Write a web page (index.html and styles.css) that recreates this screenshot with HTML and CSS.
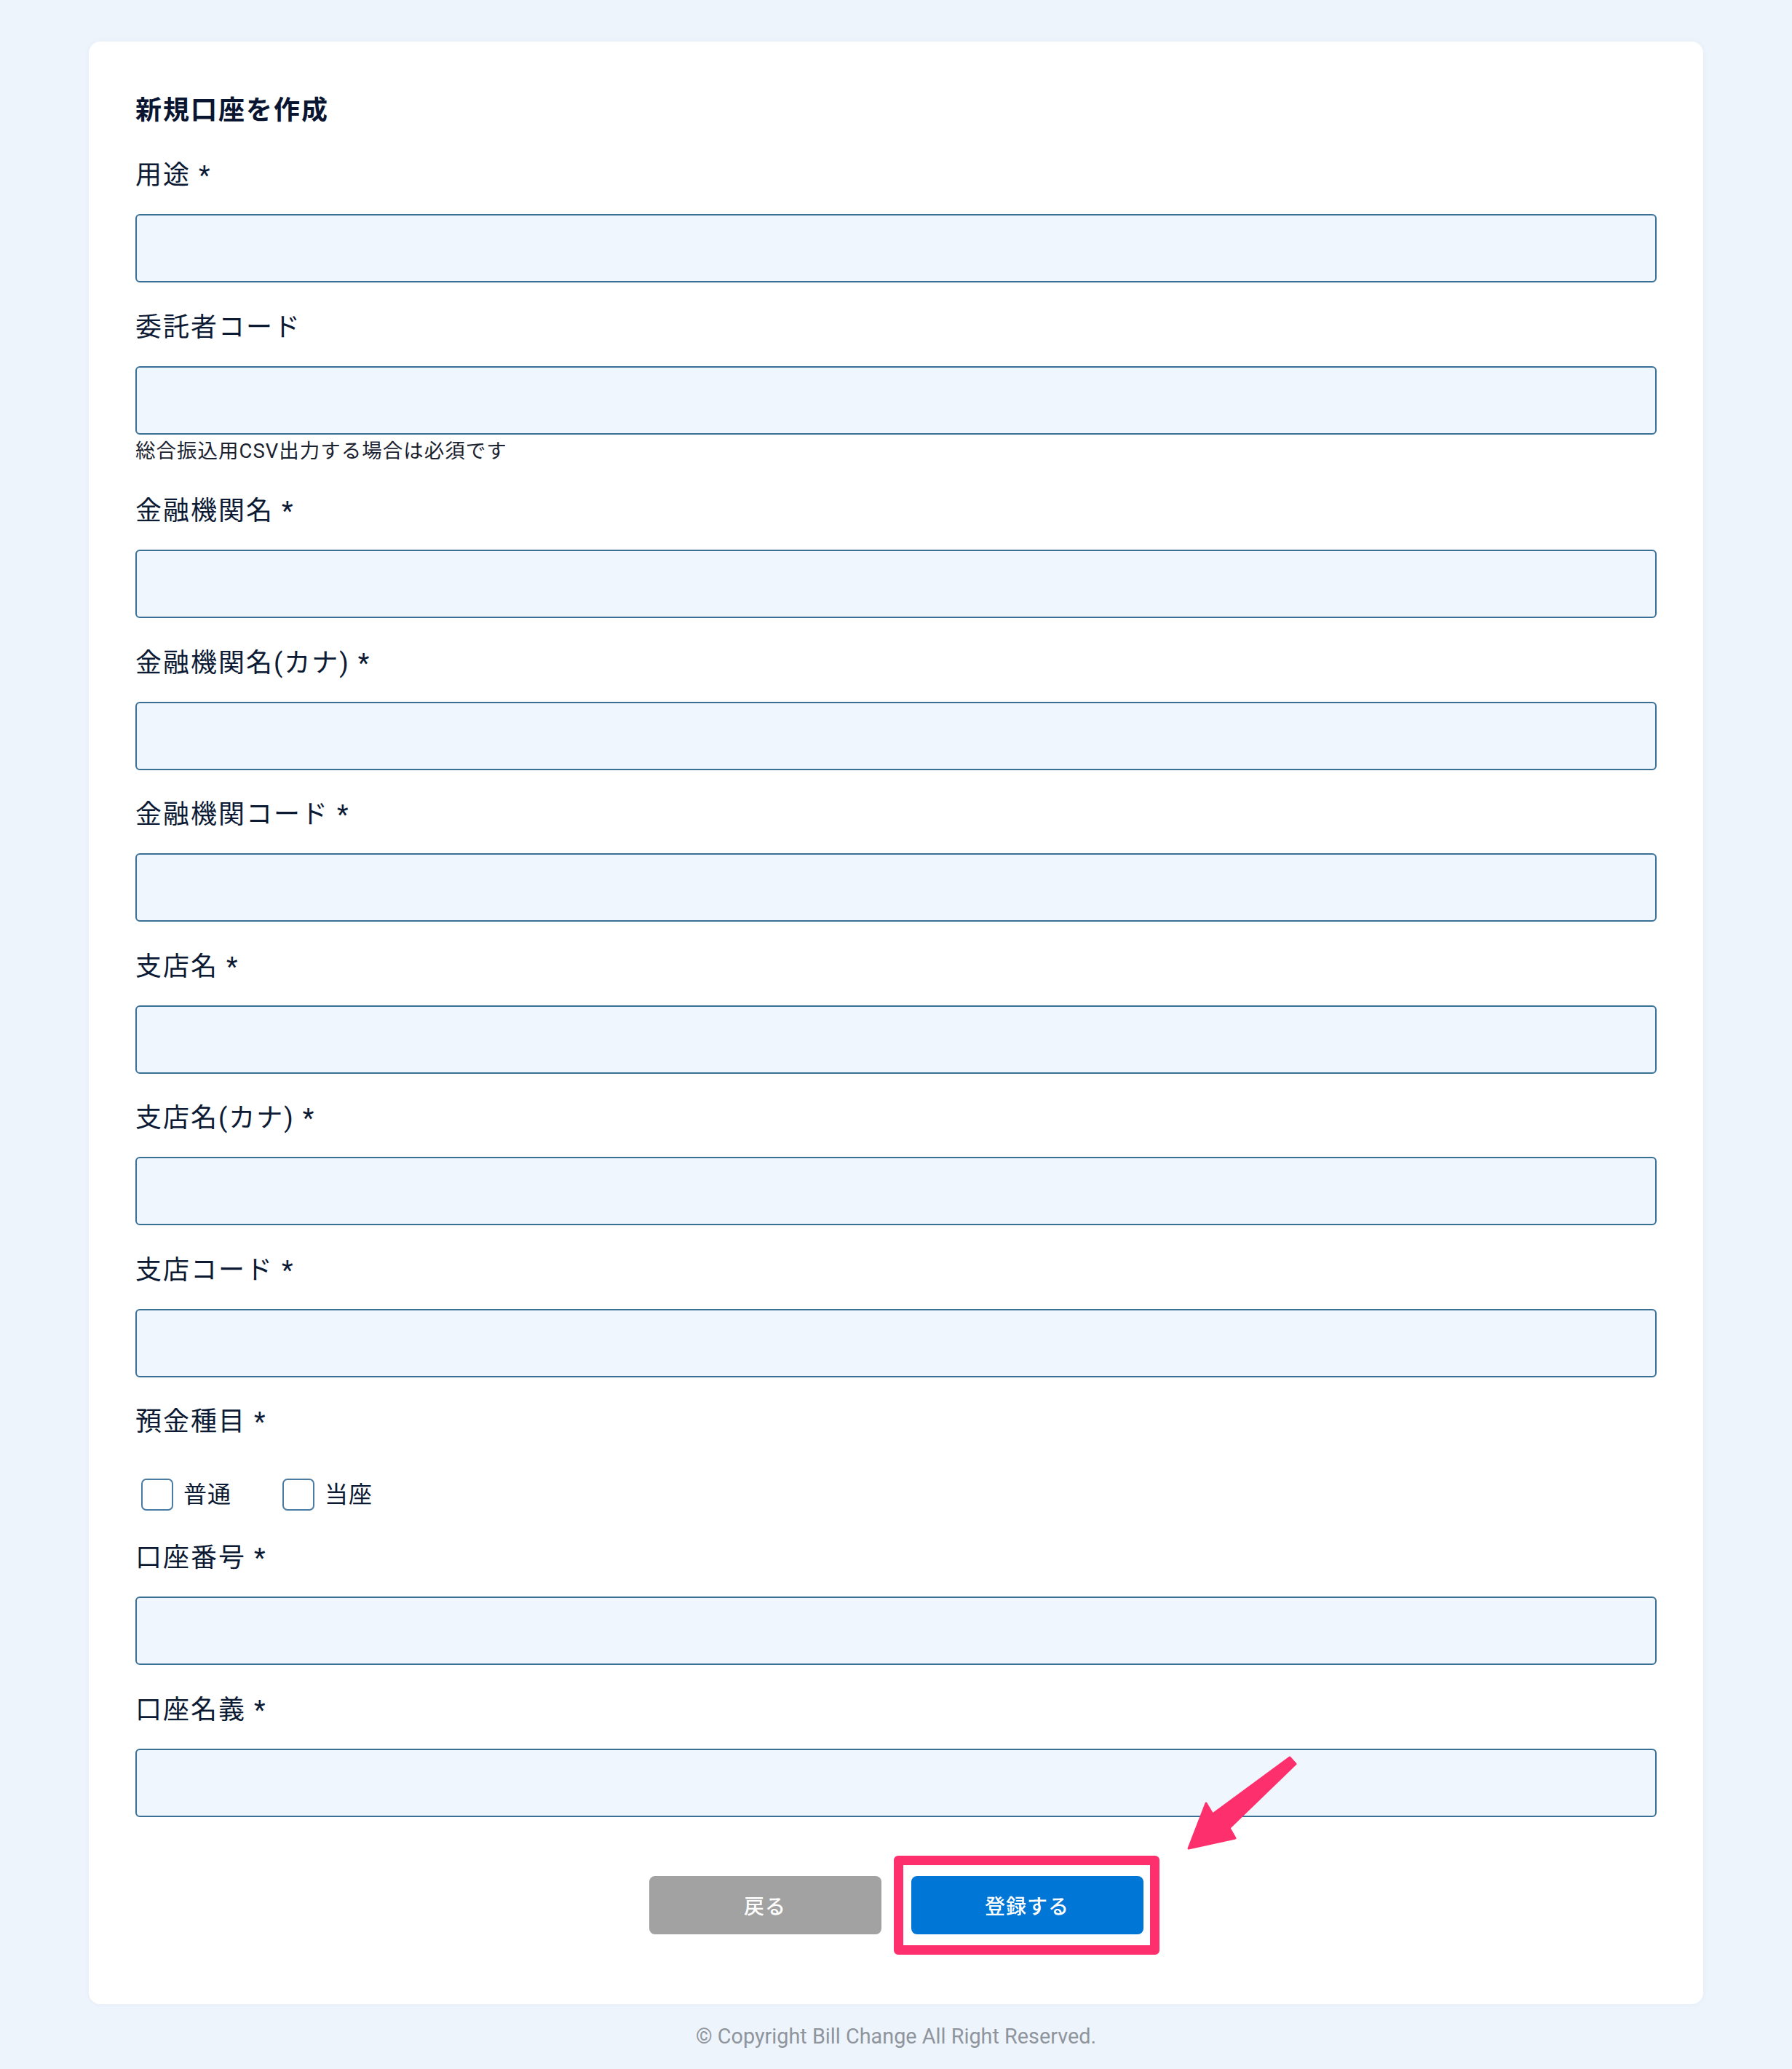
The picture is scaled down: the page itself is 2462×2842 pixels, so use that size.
FILE: index.html
```html
<!DOCTYPE html>
<html lang="ja">
<head>
    <meta charset="UTF-8">
    <meta name="viewport" content="width=device-width, initial-scale=1.0">
    <title>新規口座を作成</title>
    <link rel="stylesheet" href="styles.css">
</head>
<body>
    <main class="page">
        <section class="card">
            <h1 class="card-title">新規口座を作成</h1>

            <form class="account-form">
                <div class="field">
                    <label class="field-label" for="purpose">用途 *</label>
                    <input class="field-input" type="text" id="purpose">
                </div>

                <div class="field">
                    <label class="field-label" for="consignor">委託者コード</label>
                    <input class="field-input" type="text" id="consignor">
                    <p class="field-help">総合振込用CSV出力する場合は必須です</p>
                </div>

                <div class="field">
                    <label class="field-label" for="bank-name">金融機関名 *</label>
                    <input class="field-input" type="text" id="bank-name">
                </div>

                <div class="field">
                    <label class="field-label" for="bank-kana">金融機関名(カナ) *</label>
                    <input class="field-input" type="text" id="bank-kana">
                </div>

                <div class="field">
                    <label class="field-label" for="bank-code">金融機関コード *</label>
                    <input class="field-input" type="text" id="bank-code">
                </div>

                <div class="field">
                    <label class="field-label" for="branch-name">支店名 *</label>
                    <input class="field-input" type="text" id="branch-name">
                </div>

                <div class="field">
                    <label class="field-label" for="branch-kana">支店名(カナ) *</label>
                    <input class="field-input" type="text" id="branch-kana">
                </div>

                <div class="field">
                    <label class="field-label" for="branch-code">支店コード *</label>
                    <input class="field-input" type="text" id="branch-code">
                </div>

                <div class="field field-check">
                    <span class="field-label">預金種目 *</span>
                    <div class="check-row">
                        <label class="check-item">
                            <span class="check-box"></span>
                            <span class="check-text">普通</span>
                        </label>
                        <label class="check-item">
                            <span class="check-box"></span>
                            <span class="check-text">当座</span>
                        </label>
                    </div>
                </div>

                <div class="field">
                    <label class="field-label" for="account-no">口座番号 *</label>
                    <input class="field-input" type="text" id="account-no">
                </div>

                <div class="field field-last">
                    <label class="field-label" for="account-holder">口座名義 *</label>
                    <input class="field-input" type="text" id="account-holder">
                </div>

                <div class="form-actions">
                    <button class="btn btn-back" type="button">戻る</button>
                    <span class="submit-wrap">
                        <button class="btn btn-submit" type="submit">登録する</button>
                        <!-- annotation: highlight + arrow -->
                        <span class="highlight"></span>
                        <svg class="arrow" width="170" height="140" viewBox="1620 2405 170 140">
                            <polygon points="1770,2413 1778,2422 1687,2510 1695,2524 1631,2538 1655,2476 1664,2491"
                                     fill="#fd2f6c" stroke="#fd2f6c" stroke-width="3" stroke-linejoin="round"/>
                        </svg>
                    </span>
                </div>
            </form>
        </section>

        <footer class="footer">© Copyright Bill Change All Right Reserved.</footer>
    </main>
</body>
</html>
```

FILE: styles.css
```css
body {
    margin: 0;
    background-color: #eef4fc;
    font-family: Roboto, "Noto Sans CJK JP", sans-serif;
    color: #0c1a34;
}
.page {
    padding-top: 57px;
}
.card {
    max-width: 2218px;
    margin: 0 auto;
    box-sizing: border-box;
    background: white;
    border-radius: 16px;
    padding: 68px 64px 96px;
    box-shadow: 0 0 10px rgba(20, 60, 120, 0.04);
}
.card-title {
    margin: 0 0 35px;
    font-size: 36px;
    line-height: 54px;
    font-weight: 700;
    letter-spacing: 2px;
    color: #0a1631;
}
.field {
    margin-bottom: 34.5px;
}
.field-last {
    margin-bottom: 0;
}
.field-label {
    display: block;
    margin-bottom: 26px;
    font-size: 36px;
    line-height: 54px;
    letter-spacing: 2px;
}
.field-input {
    display: block;
    width: 100%;
    height: 94px;
    box-sizing: border-box;
    margin: 0;
    border: 2px solid #3a7096;
    border-radius: 6px;
    background: #f0f6fe;
    font: inherit;
    font-size: 32px;
    padding: 0 20px;
}
.field-help {
    margin: 2px 0 0;
    font-size: 27.5px;
    line-height: 42px;
    letter-spacing: 1px;
    color: #1a2230;
}
.field-check {
    margin-bottom: 36px;
}
.check-row {
    display: flex;
    gap: 70px;
    margin-top: 49px;
    padding-left: 8px;
}
.check-item {
    display: flex;
    align-items: center;
    gap: 14px;
    height: 48px;
}
.check-box {
    width: 44px;
    height: 44px;
    box-sizing: border-box;
    border: 2px solid #4a7ba3;
    border-radius: 7px;
    background: white;
}
.check-text {
    font-size: 32px;
    line-height: 48px;
    letter-spacing: 1px;
}
.form-actions {
    display: flex;
    justify-content: center;
    gap: 41px;
    margin-top: 81px;
}
.btn {
    width: 319px;
    height: 80px;
    border: none;
    border-radius: 8px;
    color: white;
    font-family: "Noto Sans CJK JP", sans-serif;
    font-size: 28px;
    font-weight: 500;
    letter-spacing: 1px;
}
.btn-back {
    background: #a2a2a2;
}
.btn-submit {
    background: #0076d6;
}
.submit-wrap {
    position: relative;
    display: block;
}
.highlight {
    position: absolute;
    top: -28px;
    left: -24px;
    width: 365px;
    height: 136px;
    box-sizing: border-box;
    border: 13px solid #fd2f6c;
    border-radius: 6px;
}
.arrow {
    position: absolute;
    left: 370px;
    top: -171px;
}
.footer {
    padding: 23px 0 25px;
    text-align: center;
    font-family: Roboto, sans-serif;
    font-size: 28.8px;
    line-height: 42px;
    color: #8f959c;
}
```
